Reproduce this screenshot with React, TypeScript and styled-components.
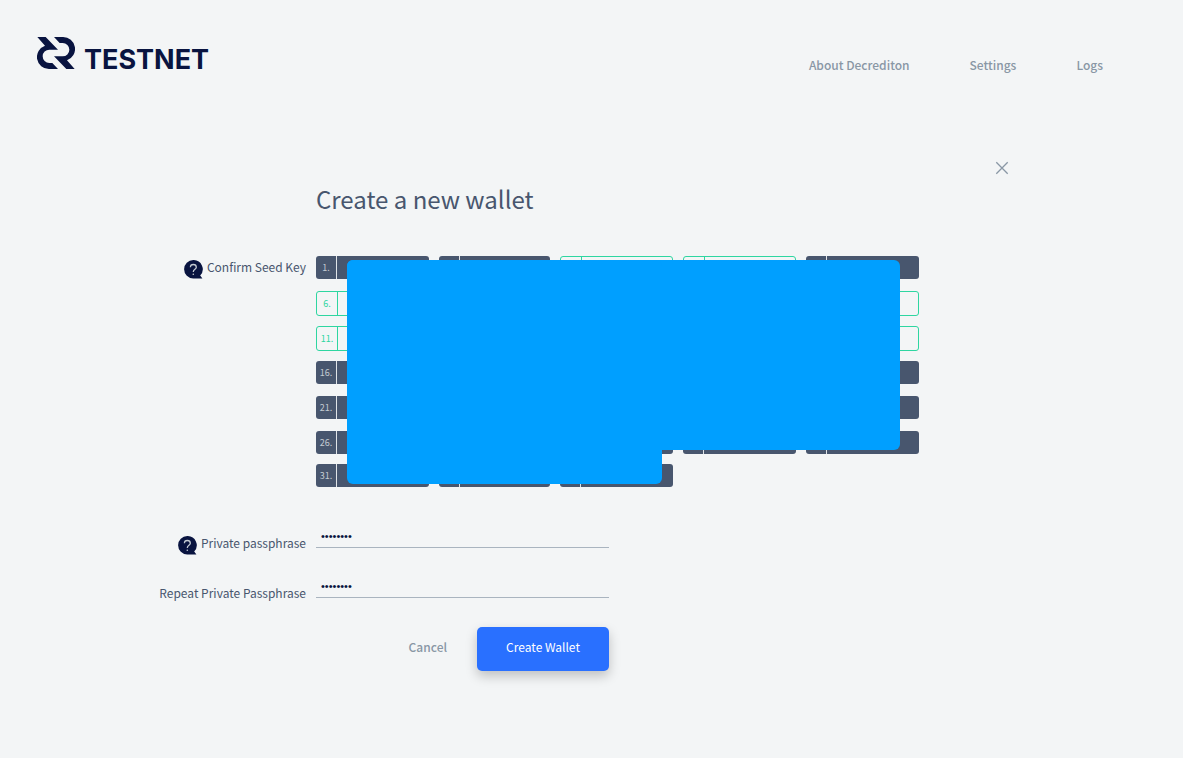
import React, { useState } from "react";
import styled, { createGlobalStyle } from "styled-components";

const color = {
  page: "#f3f5f6",
  navy: "#091440",
  slate: "#48566e",
  muted: "#8997a5",
  line: "#a9b4bf",
  green: "#2ed6a1",
  blue: "#2970ff",
  cover: "#009fff",
};

const GlobalStyle = createGlobalStyle`
  *, *::before, *::after { box-sizing: border-box; }
  body {
    margin: 0;
    background: ${color.page};
    color: ${color.slate};
    font-family: "Noto Sans CJK SC", "Noto Sans", sans-serif;
    font-size: 12px;
    line-height: 16px;
  }
`;

const Header = styled.header`
  display: flex;
  align-items: flex-start;
  justify-content: space-between;
  padding: 37px 80px 0 37px;
`;

const Brand = styled.div`
  display: flex;
  align-items: flex-end;
  gap: 9px;
  height: 32px;
  color: ${color.navy};
`;

const BrandName = styled.span`
  font-family: Inter, sans-serif;
  font-size: 27px;
  font-weight: 700;
  line-height: 18px;
`;

const Nav = styled.nav`
  display: flex;
  gap: 60px;
  padding-top: 20px;
`;

const NavLink = styled.a`
  color: ${color.muted};
  font-weight: 500;
  text-decoration: none;
`;

const Main = styled.main`
  padding: 88px 174px 48px 0;
`;

const CloseButton = styled.button`
  display: block;
  margin-left: auto;
  padding: 0;
  border: 0;
  background: none;
  color: ${color.muted};
  cursor: pointer;

  svg { display: block; }
`;

const Title = styled.h1`
  margin: 4px 0 37px 316px;
  font-size: 24px;
  font-weight: 400;
  line-height: 40px;
`;

const Form = styled.form`
  display: flex;
  flex-direction: column;
`;

const Row = styled.div<{ $top?: number }>`
  display: grid;
  grid-template-columns: 306px 1fr;
  column-gap: 10px;
  margin-top: ${(p) => p.$top ?? 0}px;
`;

const Label = styled.label`
  display: flex;
  justify-content: flex-end;
  gap: 4px;
  padding-top: 3px;

  svg { margin-top: 1px; }
`;

const FieldLabel = styled(Label)`
  padding-top: 13px;
`;

const SeedArea = styled.div`
  position: relative;
  width: 603px;
`;

const SeedList = styled.ol`
  display: grid;
  grid-template-columns: 113px 111px repeat(3, 113px);
  gap: 10px;
  align-items: start;
  margin: 0;
  padding: 0;
  list-style: none;
`;

const SeedWord = styled.li<{ $open: boolean }>`
  display: flex;
  height: ${(p) => (p.$open ? 25 : 23)}px;
  border: ${(p) => (p.$open ? `1px solid ${color.green}` : "0")};
  border-radius: 3px;
  background: ${(p) => (p.$open ? "transparent" : color.slate)};
  color: ${(p) => (p.$open ? color.green : "#c4cbd2")};
`;

const SeedNumber = styled.span<{ $open: boolean }>`
  width: 21px;
  border-right: 1px solid ${(p) => (p.$open ? color.green : "#e0e4e8")};
  font-size: 9px;
  line-height: 23px;
  text-align: center;
`;

const Cover = styled.div<{ $width: number; $height: number }>`
  position: absolute;
  top: 4px;
  left: 31px;
  width: ${(p) => p.$width}px;
  height: ${(p) => p.$height}px;
  border-radius: 6px;
  background: ${color.cover};
`;

const PassInput = styled.input`
  width: 293px;
  height: 26px;
  padding: 2px 5px 0;
  border: 0;
  border-bottom: 1px solid ${color.line};
  outline: 0;
  background: transparent;
  color: ${color.navy};
  font-family: "Liberation Sans", sans-serif;
  font-size: 11px;
`;

const Actions = styled.div`
  display: flex;
  justify-content: flex-end;
  align-items: center;
  width: 293px;
`;

const CancelButton = styled.button`
  padding: 0 30px 4px;
  border: 0;
  background: none;
  color: ${color.muted};
  font: inherit;
  font-weight: 500;
  cursor: pointer;
`;

const CreateButton = styled.button`
  width: 132px;
  height: 44px;
  padding: 0 0 4px;
  border: 0;
  border-radius: 5px;
  background: ${color.blue};
  box-shadow: 0 5px 12px rgba(0, 0, 0, 0.22);
  color: #fff;
  font: inherit;
  cursor: pointer;
`;

const LOGO_HALF =
  "M1 0H26L63 38H37A20 20 0 0 0 37 78H46L63 96H36A36 36 0 0 1 24 26Z";

const LogoMark = () => (
  <svg width="38" height="32" viewBox="0 0 114 96" fill="currentColor" aria-hidden="true">
    <path d={LOGO_HALF} />
    <path d={LOGO_HALF} transform="rotate(180 57 48)" />
  </svg>
);

const HelpIcon = () => (
  <svg width="19" height="19" viewBox="0 0 19 19" aria-hidden="true">
    <path d="M9.3 0A9.2 9.2 0 1 0 9.3 18.4H18.4L16.2 15.5A9.2 9.2 0 0 0 9.3 0Z" fill={color.navy} />
    <path
      d="M6.4 7.3C6.4 5.6 7.6 4.5 9.3 4.5C11.1 4.5 12.3 5.6 12.3 7.2C12.3 9.3 9.3 9.4 9.3 12"
      fill="none"
      stroke="#c4cbd2"
      strokeWidth="1.3"
    />
    <circle cx="9.3" cy="14.2" r="0.8" fill="#c4cbd2" />
  </svg>
);

const OPEN_WORDS = new Set([3, 4, 6, 8, 9, 10, 11, 13, 15, 18, 24]);
const WORDS = Array.from({ length: 33 }, (_, i) => i + 1);

export default function App() {
  const [pass, setPass] = useState("password");
  const [repeat, setRepeat] = useState("password");

  return (
    <>
      <GlobalStyle />
      <Header>
        <Brand>
          <LogoMark />
          <BrandName>TESTNET</BrandName>
        </Brand>
        <Nav>
          <NavLink href="#about">About Decrediton</NavLink>
          <NavLink href="#settings">Settings</NavLink>
          <NavLink href="#logs">Logs</NavLink>
        </Nav>
      </Header>
      <Main>
        <CloseButton type="button" aria-label="Close">
          <svg width="14" height="14" viewBox="0 0 14 14" stroke="currentColor" strokeWidth="1.3">
            <path d="M1.3 1.3L12.7 12.7M12.7 1.3L1.3 12.7" />
          </svg>
        </CloseButton>
        <Title>Create a new wallet</Title>
        <Form onSubmit={(e) => e.preventDefault()}>
          <Row>
            <Label as="div" id="seed-label">
              <HelpIcon />
              Confirm Seed Key
            </Label>
            <SeedArea>
              <SeedList aria-labelledby="seed-label">
                {WORDS.map((n) => (
                  <SeedWord key={n} $open={OPEN_WORDS.has(n)}>
                    <SeedNumber $open={OPEN_WORDS.has(n)}>{n}.</SeedNumber>
                  </SeedWord>
                ))}
              </SeedList>
              <Cover $width={553} $height={190} />
              <Cover $width={315} $height={224} />
            </SeedArea>
          </Row>
          <Row $top={35}>
            <FieldLabel htmlFor="pass">
              <HelpIcon />
              Private passphrase
            </FieldLabel>
            <PassInput id="pass" type="password" value={pass} onChange={(e) => setPass(e.target.value)} />
          </Row>
          <Row $top={17}>
            <FieldLabel htmlFor="repeat">Repeat Private Passphrase</FieldLabel>
            <PassInput id="repeat" type="password" value={repeat} onChange={(e) => setRepeat(e.target.value)} />
          </Row>
          <Row $top={26}>
            <span />
            <Actions>
              <CancelButton type="button">Cancel</CancelButton>
              <CreateButton type="submit">Create Wallet</CreateButton>
            </Actions>
          </Row>
        </Form>
      </Main>
    </>
  );
}
